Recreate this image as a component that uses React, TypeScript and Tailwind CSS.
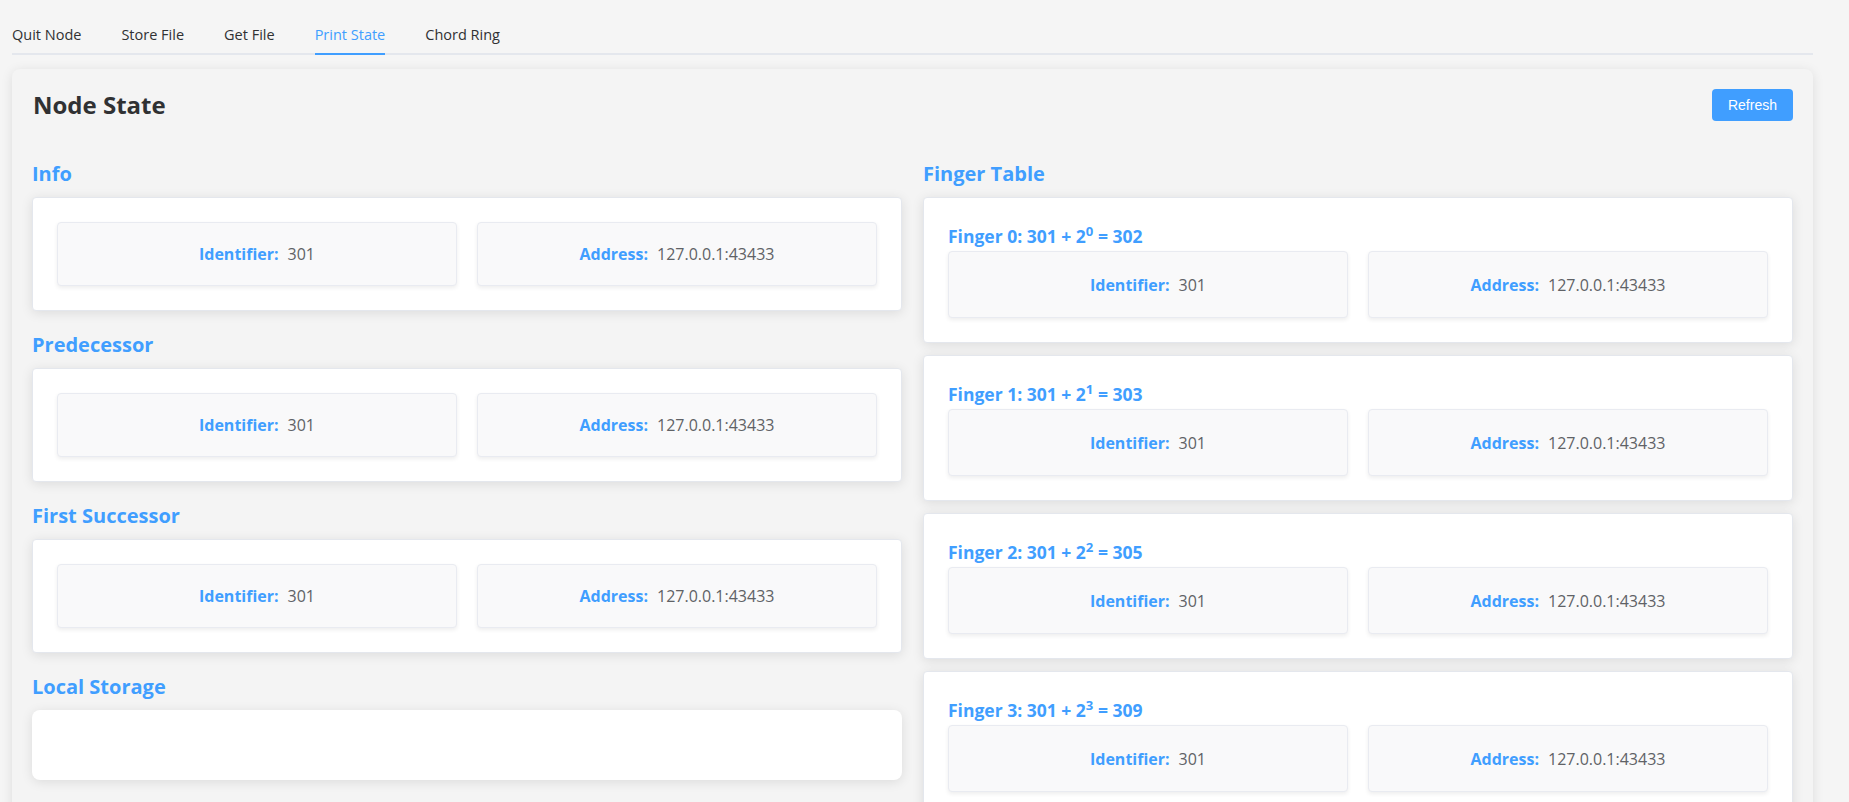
import React from "react";

const font = { fontFamily: '"Open Sans", "Noto Sans", sans-serif' };

function Box({ label, value, tall }: { label: string; value: string; tall?: boolean }) {
  return (
    <div
      className={`flex ${tall ? "h-[67px]" : "h-[64px]"} items-center justify-center rounded-[4px] border border-[#e9ebf1] bg-[#f9f9fa] shadow-[0_2px_4px_rgba(0,0,0,0.07)]`}
    >
      <span className="text-[16px] font-bold text-[#409eff]">{label}</span>
      <span className="ml-[9px] text-[16px] text-[#606266]">{value}</span>
    </div>
  );
}

function Pair({ tall }: { tall?: boolean }) {
  return (
    <div className="grid grid-cols-2 gap-[20px]">
      <Box label="Identifier:" value="301" tall={tall} />
      <Box label="Address:" value="127.0.0.1:43433" tall={tall} />
    </div>
  );
}

function Section({ title, children }: { title: string; children: React.ReactNode }) {
  return (
    <div className="flex flex-col">
      <h3 className="mb-[9px] text-[20px] font-bold leading-[28px] text-[#409eff]">{title}</h3>
      {children}
    </div>
  );
}

const cardCls =
  "rounded-[4px] border border-[#e4e7ed] bg-white p-[24px] shadow-[0_2px_12px_rgba(0,0,0,0.1)]";

export default function App() {
  const tabs = ["Quit Node", "Store File", "Get File", "Print State", "Chord Ring"];
  const fingers = [
    { i: 0, r: 302 },
    { i: 1, r: 303 },
    { i: 2, r: 305 },
    { i: 3, r: 309 },
  ];
  return (
    <div className="min-h-screen bg-[#f5f5f5] pl-[12px] pr-[36px] pt-[15px]" style={font}>
      <div className="flex h-[40px] border-b-2 border-[#e4e7ed]">
        {tabs.map((t, idx) => (
          <div key={t} className={`${idx === 0 ? "pr-[20px]" : "px-[20px]"} h-[40px]`}>
            <div
              className={`h-[40px] text-[14.5px] leading-[40px] ${
                t === "Print State" ? "border-b-2 border-[#409eff] text-[#409eff]" : "text-[#303133]"
              }`}
            >
              {t}
            </div>
          </div>
        ))}
      </div>

      <div className="mt-[14px] rounded-[8px] bg-[#f4f4f4] p-[20px] shadow-[0_2px_12px_rgba(0,0,0,0.1)]">
        <div className="flex h-[32px] items-center justify-between">
          <h2 className="pl-[1px] text-[24px] font-bold text-[#303133]">Node State</h2>
          <button
            className="h-[32px] rounded-[4px] bg-[#409eff] px-[16px] text-[14px] text-white"
            style={{ fontFamily: '"Liberation Sans", Arial, sans-serif' }}
          >
            Refresh
          </button>
        </div>

        <div className="mt-[39px] grid grid-cols-2 gap-x-[21px]">
          <div className="flex flex-col gap-[20px]">
            <Section title="Info">
              <div className={cardCls}>
                <Pair />
              </div>
            </Section>
            <Section title="Predecessor">
              <div className={cardCls}>
                <Pair />
              </div>
            </Section>
            <Section title="First Successor">
              <div className={cardCls}>
                <Pair />
              </div>
            </Section>
            <Section title="Local Storage">
              <div className="h-[70px] rounded-[8px] bg-white shadow-[0_2px_12px_rgba(0,0,0,0.1)]" />
            </Section>
          </div>

          <div className="flex flex-col">
            <Section title="Finger Table">
              <div className="flex flex-col gap-[12px]">
                {fingers.map((f) => (
                  <div key={f.i} className={cardCls}>
                    <div className="h-[29px] text-[17.5px] font-bold leading-[29px] text-[#409eff]">
                      Finger {f.i}: 301 + 2<sup>{f.i}</sup> = {f.r}
                    </div>
                    <Pair tall />
                  </div>
                ))}
              </div>
            </Section>
          </div>
        </div>
      </div>
    </div>
  );
}
